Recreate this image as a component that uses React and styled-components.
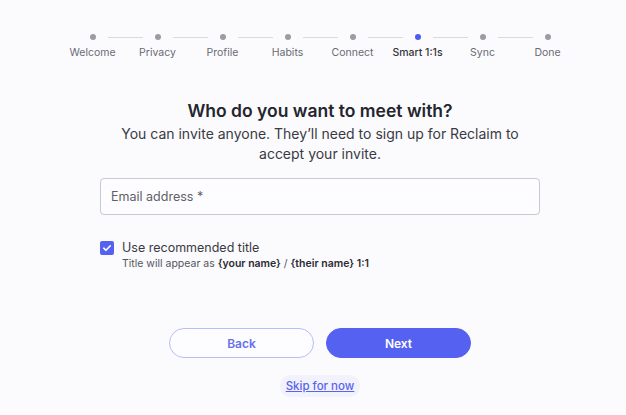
import React from "react";
import styled, { createGlobalStyle } from "styled-components";

const GlobalStyle = createGlobalStyle`
  html, body {
    margin: 0;
    padding: 0;
    background: #fbfbfe;
  }
  body {
    font-family: Inter, "Open Sans", Arial, sans-serif;
    color: #2b2b33;
  }
`;

const Page = styled.div`
  display: flex;
  flex-direction: column;
  align-items: center;
  padding: 31px 0 0 14px;
  box-sizing: border-box;
  width: 626px;
  height: 415px;
  overflow: hidden;
`;

const Stepper = styled.div`
  display: grid;
  grid-template-columns: repeat(8, 65px);
`;

const Step = styled.div`
  display: flex;
  flex-direction: column;
  align-items: center;
`;

const DotRow = styled.div`
  display: flex;
  align-items: center;
  gap: 12px;
  width: 100%;
  height: 12px;
`;

const Line = styled.div`
  flex: 1;
  height: 1px;
  background: ${(p) => (p.$hidden ? "transparent" : "#d9d9de")};
`;

const Dot = styled.div`
  width: 6px;
  height: 6px;
  border-radius: 50%;
  background: ${(p) => (p.$active ? "#4f5bf0" : "#9c9ca3")};
`;

const StepLabel = styled.div`
  margin-top: 3px;
  font-size: 10.5px;
  line-height: 14px;
  white-space: nowrap;
  color: ${(p) => (p.$active ? "#33333b" : "#6a6a72")};
  font-weight: ${(p) => (p.$active ? 500 : 400)};
`;

const Title = styled.h1`
  margin: 39px 0 0;
  font-size: 17.5px;
  line-height: 24px;
  font-weight: 600;
  color: #25252d;
  text-align: center;
`;

const Subtitle = styled.p`
  margin: 1px 0 0;
  max-width: 400px;
  font-size: 14px;
  line-height: 20px;
  color: #3a3a42;
  text-align: center;
`;

const Input = styled.input`
  margin-top: 14px;
  width: 440px;
  height: 37px;
  box-sizing: border-box;
  border: 1px solid #c9c9cf;
  border-radius: 4px;
  background: #fdfdff;
  padding: 0 10px;
  font-family: inherit;
  font-size: 12.5px;
  color: #333;
  outline: none;

  &::placeholder {
    color: #5f5f67;
  }
`;

const CheckRow = styled.label`
  margin-top: 25px;
  width: 440px;
  display: flex;
  align-items: flex-start;
  gap: 8px;
`;

const Box = styled.span`
  width: 14px;
  height: 14px;
  margin-top: 1px;
  border-radius: 2px;
  background: #5561f0;
  display: flex;
  align-items: center;
  justify-content: center;
  flex-shrink: 0;
`;

const CheckText = styled.div`
  display: flex;
  flex-direction: column;
`;

const CheckLabel = styled.span`
  font-size: 12.5px;
  line-height: 16px;
  color: #3a3a42;
`;

const Hint = styled.span`
  font-size: 10.5px;
  line-height: 16px;
  color: #55555d;

  b {
    font-weight: 600;
    color: #2b2b33;
  }
`;

const Buttons = styled.div`
  margin-top: 56px;
  display: flex;
  gap: 12px;
`;

const Button = styled.button`
  width: 145px;
  height: 30px;
  border-radius: 15px;
  font-family: inherit;
  font-size: 12px;
  font-weight: 600;
  cursor: pointer;
  border: 1px solid ${(p) => (p.$primary ? "#5561f0" : "#b8bdf6")};
  background: ${(p) => (p.$primary ? "#5561f0" : "#fdfdff")};
  color: ${(p) => (p.$primary ? "#ffffff" : "#6670ee")};
`;

const Skip = styled.a`
  margin-top: 17px;
  padding: 3px 6px;
  border-radius: 10px;
  background: #f1f2fb;
  font-size: 11.5px;
  font-weight: 500;
  line-height: 16px;
  color: #5a63ee;
  text-decoration: underline;
  cursor: pointer;
`;

const steps = ["Welcome", "Privacy", "Profile", "Habits", "Connect", "Smart 1:1s", "Sync", "Done"];
const activeStep = 5;

export default function App() {
  return (
    <>
      <GlobalStyle />
      <Page>
        <Stepper>
          {steps.map((s, i) => (
            <Step key={s}>
              <DotRow>
                <Line $hidden={i === 0} />
                <Dot $active={i === activeStep} />
                <Line $hidden={i === steps.length - 1} />
              </DotRow>
              <StepLabel $active={i === activeStep}>{s}</StepLabel>
            </Step>
          ))}
        </Stepper>

        <Title>Who do you want to meet with?</Title>
        <Subtitle>You can invite anyone. They’ll need to sign up for Reclaim to accept your invite.</Subtitle>

        <Input placeholder="Email address *" />

        <CheckRow>
          <Box>
            <svg width="10" height="10" viewBox="0 0 10 10">
              <path d="M1.8 5.2 L4 7.3 L8.3 2.8" fill="none" stroke="#fff" strokeWidth="1.6" strokeLinecap="round" strokeLinejoin="round" />
            </svg>
          </Box>
          <CheckText>
            <CheckLabel>Use recommended title</CheckLabel>
            <Hint>
              Title will appear as <b>{"{your name}"}</b> / <b>{"{their name}"} 1:1</b>
            </Hint>
          </CheckText>
        </CheckRow>

        <Buttons>
          <Button>Back</Button>
          <Button $primary>Next</Button>
        </Buttons>

        <Skip>Skip for now</Skip>
      </Page>
    </>
  );
}
